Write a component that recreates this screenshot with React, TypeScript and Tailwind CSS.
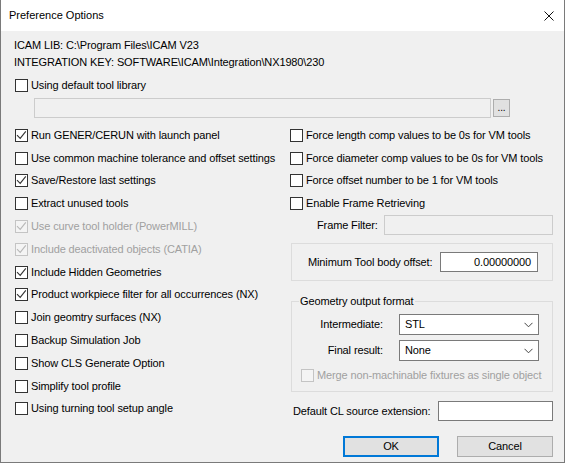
import React from 'react'

const font = { fontFamily: '"Liberation Sans", Arial, sans-serif' }

function Box({ checked = false, disabled = false }: { checked?: boolean; disabled?: boolean }) {
  return (
    <span
      className={`flex h-[13px] w-[13px] shrink-0 items-start justify-start border ${
        disabled ? 'border-[#c4c4c4] bg-[#f4f4f4]' : 'border-[#333333] bg-white'
      }`}
    >
      {checked && (
        <svg width="11" height="11" viewBox="0 0 11 11">
          <path
            d="M1 5.2 L4.2 8.4 L9.8 1.4"
            fill="none"
            strokeWidth="1.1"
            className={disabled ? 'stroke-[#b8b8b8]' : 'stroke-[#333333]'}
          />
        </svg>
      )}
    </span>
  )
}

function Check({ label, checked, disabled }: { label: string; checked?: boolean; disabled?: boolean }) {
  return (
    <div className="flex h-[22.8px] items-center gap-[3px] pl-px">
      <Box checked={checked} disabled={disabled} />
      <span className={`whitespace-nowrap ${disabled ? 'text-[#a0a0a0]' : 'text-black'}`}>{label}</span>
    </div>
  )
}

function Select({ value }: { value: string }) {
  return (
    <div className="flex h-[21px] w-[140px] items-center justify-between border border-[#7a7a7a] bg-white pl-[5px] pr-[5px]">
      <span>{value}</span>
      <svg width="9" height="6" viewBox="0 0 9 6">
        <path d="M0.5 0.8 L4.5 4.8 L8.5 0.8" fill="none" stroke="#444444" strokeWidth="1" />
      </svg>
    </div>
  )
}

const left = [
  { label: 'Run GENER/CERUN with launch panel', checked: true },
  { label: 'Use common machine tolerance and offset settings' },
  { label: 'Save/Restore last settings', checked: true },
  { label: 'Extract unused tools' },
  { label: 'Use curve tool holder (PowerMILL)', checked: true, disabled: true },
  { label: 'Include deactivated objects (CATIA)', checked: true, disabled: true },
  { label: 'Include Hidden Geometries', checked: true },
  { label: 'Product workpiece filter for all occurrences (NX)', checked: true },
  { label: 'Join geomtry surfaces (NX)' },
  { label: 'Backup Simulation Job' },
  { label: 'Show CLS Generate Option' },
  { label: 'Simplify tool profile' },
  { label: 'Using turning tool setup angle' },
]

const right = [
  'Force length comp values to be 0s for VM tools',
  'Force diameter comp values to be 0s for VM tools',
  'Force offset number to be 1 for VM tools',
  'Enable Frame Retrieving',
]

export default function App() {
  return (
    <div
      className="flex h-[463px] w-[565px] flex-col overflow-hidden border-x border-b border-[#7a7a7a] bg-[#f0f0f0] text-[11px] leading-[17px] tracking-[-0.12px] text-black"
      style={font}
    >
      {/* Title bar */}
      <div className="flex h-[31px] shrink-0 items-center justify-between bg-white pl-[8px] pr-[10px]">
        <span className="text-[11px] tracking-normal">Preference Options</span>
        <svg width="10" height="10" viewBox="0 0 10 10">
          <path d="M0.5 0.5 L9.5 9.5 M9.5 0.5 L0.5 9.5" stroke="#111111" strokeWidth="1" />
        </svg>
      </div>

      <div className="flex flex-1 flex-col pl-[13px] pr-[11px] pt-[6px]">
        <div>ICAM LIB: C:\Program Files\ICAM V23</div>
        <div>INTEGRATION KEY: SOFTWARE\ICAM\Integration\NX1980\230</div>
        <div className="mt-[6px] flex h-[17px] items-center gap-[3px] pl-px">
          <Box />
          <span>Using default tool library</span>
        </div>
        <div className="mt-[4px] flex items-center gap-[2px] pl-[20px]">
          <div className="h-[20px] w-[457px] border border-[#cccccc] bg-[#f0f0f0]" />
          <div className="flex h-[18px] w-[17px] items-end justify-center border border-[#adadad] bg-[#e1e1e1] pb-[3px] text-[10px] leading-[10px]">
            ...
          </div>
        </div>

        <div className="mt-[6px] flex">
          {/* left column */}
          <div className="flex w-[275px] shrink-0 flex-col">
            {left.map((item) => (
              <Check key={item.label} {...item} />
            ))}
          </div>

          {/* right column */}
          <div className="flex min-w-0 flex-1 flex-col">
            {right.map((label) => (
              <Check key={label} label={label} />
            ))}
            <div className="flex items-center">
              <span className="ml-[28px] w-[67px] shrink-0">Frame Filter:</span>
              <div className="h-[20px] flex-1 border border-[#cccccc] bg-[#f0f0f0]" />
            </div>

            <div className="ml-[2px] mt-[8px] flex h-[38px] items-center justify-between border border-[#dcdcdc] pl-[16px] pr-[14px]">
              <span>Minimum Tool body offset:</span>
              <div className="flex h-[20px] w-[98px] items-center justify-end border border-[#7a7a7a] bg-white pr-[6px]">
                0.00000000
              </div>
            </div>

            <fieldset className="ml-[2px] mt-[13px] border border-[#dcdcdc] px-[9px] pb-[9px]">
              <legend className="ml-[-2px] px-px leading-[14px]">Geometry output format</legend>
              <div className="mt-[6px] flex items-center justify-end gap-[16px] pr-[4px]">
                <span>Intermediate:</span>
                <Select value="STL" />
              </div>
              <div className="mt-[5px] flex items-center justify-end gap-[16px] pr-[4px]">
                <span>Final result:</span>
                <Select value="None" />
              </div>
              <div className="mt-[7px] flex h-[14px] items-center gap-[3px]">
                <Box disabled />
                <span className="whitespace-nowrap text-[#a0a0a0]">Merge non-machinable fixtures as single object</span>
              </div>
            </fieldset>

            <div className="mt-[9px] flex items-center justify-between pl-[4px]">
              <span>Default CL source extension:</span>
              <div className="h-[20px] w-[115px] border border-[#7a7a7a] bg-white" />
            </div>

            <div className="mt-[15px] flex justify-end gap-[18px]">
              <button className="flex h-[21px] w-[96px] items-center justify-center border-2 border-[#0078d7] bg-[#e1e1e1]">
                OK
              </button>
              <button className="flex h-[21px] w-[96px] items-center justify-center border border-[#adadad] bg-[#e1e1e1]">
                Cancel
              </button>
            </div>
          </div>
        </div>
      </div>
    </div>
  )
}
